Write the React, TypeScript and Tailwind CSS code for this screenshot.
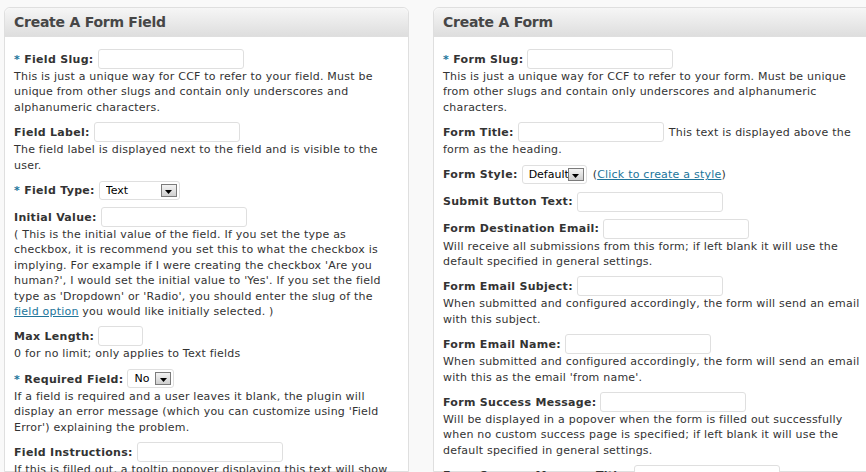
import React from "react";

const Input = ({ narrow }: { narrow?: boolean }) => (
  <span
    className={
      narrow
        ? "inline-block h-[20px] w-[45px] shrink-0 rounded-[3px] border border-[#dfdfdf] bg-white"
        : "inline-block h-[20px] w-[146px] shrink-0 rounded-[3px] border border-[#dfdfdf] bg-white"
    }
  />
);

const Select = ({ text, wide }: { text: string; wide: "text" | "no" | "default" }) => (
  <span
    className={
      "flex h-[19px] shrink-0 items-center rounded-[3px] border border-[#dfdfdf] bg-white pl-[6px] pr-[2px] text-[11px] font-normal tracking-normal text-black " +
      (wide === "text" ? "w-[81px]" : wide === "no" ? "w-[47px]" : "w-[65px]")
    }
  >
    <span className="min-w-0 flex-1 overflow-hidden leading-[17px]">{text}</span>
    <span className="flex h-[13px] w-[16px] shrink-0 items-end justify-center border border-[#7b7b7b] bg-linear-to-b from-[#f4f4f4] to-[#cfcfcf] pb-[2px]">
      <svg width="7" height="4" viewBox="0 0 7 4">
        <path d="M0 0H7L3.5 4Z" fill="#000" />
      </svg>
    </span>
  </span>
);

const Field = ({
  label,
  req,
  control,
  after,
  lines,
}: {
  label: string;
  req?: boolean;
  control: React.ReactNode;
  after?: React.ReactNode;
  lines?: React.ReactNode[];
}) => (
  <div className="flex flex-col">
    <div className="flex h-[20px] items-center gap-[4px] whitespace-nowrap">
      <span className="pt-[2px] font-bold tracking-[0.3px] text-[#333]">
        {req && <span className="text-[#21759b]">* </span>}
        {label}
      </span>
      {control}
      {after}
    </div>
    {lines && (
      <div className="whitespace-nowrap leading-[15.4px] text-[#333]">
        {lines.map((l, i) => (
          <div key={i}>{l}</div>
        ))}
      </div>
    )}
  </div>
);

const Panel = ({
  title,
  wide,
  children,
}: {
  title: string;
  wide?: boolean;
  children: React.ReactNode;
}) => (
  <div
    className={
      "shrink-0 rounded-t-[6px] border border-[#dfdfdf] bg-white " +
      (wide ? "w-[470px]" : "w-[405px]")
    }
  >
    <div className="h-[29px] rounded-t-[6px] border-b border-[#dfdfdf] bg-linear-to-b from-[#f6f6f6] to-[#dedede] px-[9px] text-[14px] font-bold leading-[29px] tracking-[-0.25px] text-[#464646]">
      {title}
    </div>
    <div className="flex flex-col gap-[7px] px-[9px] pt-[12px] text-[11px] tracking-[0.22px]">
      {children}
    </div>
  </div>
);

const Link = ({ children }: { children: React.ReactNode }) => (
  <span className="text-[#21759b] underline">{children}</span>
);

export default function App() {
  return (
    <div className="flex h-[472px] w-[866px] gap-[24px] overflow-hidden bg-[#f9f9f9] pl-[4px] pt-[7px] font-['DejaVu_Sans','Verdana',sans-serif]">
      <Panel title="Create A Form Field">
        <Field
          label="Field Slug:"
          req
          control={<Input />}
          lines={[
            "This is just a unique way for CCF to refer to your field. Must be",
            "unique from other slugs and contain only underscores and",
            "alphanumeric characters.",
          ]}
        />
        <Field
          label="Field Label:"
          control={<Input />}
          lines={[
            "The field label is displayed next to the field and is visible to the",
            "user.",
          ]}
        />
        <Field label="Field Type:" req control={<Select text="Text" wide="text" />} />
        <Field
          label="Initial Value:"
          control={<Input />}
          lines={[
            "( This is the initial value of the field. If you set the type as",
            "checkbox, it is recommend you set this to what the checkbox is",
            "implying. For example if I were creating the checkbox 'Are you",
            "human?', I would set the initial value to 'Yes'. If you set the field",
            "type as 'Dropdown' or 'Radio', you should enter the slug of the",
            <>
              <Link>field option</Link> you would like initially selected. )
            </>,
          ]}
        />
        <Field
          label="Max Length:"
          control={<Input narrow />}
          lines={["0 for no limit; only applies to Text fields"]}
        />
        <Field
          label="Required Field:"
          req
          control={<Select text="No" wide="no" />}
          lines={[
            "If a field is required and a user leaves it blank, the plugin will",
            "display an error message (which you can customize using 'Field",
            "Error') explaining the problem.",
          ]}
        />
        <Field
          label="Field Instructions:"
          control={<Input />}
          lines={[
            "If this is filled out, a tooltip popover displaying this text will show",
          ]}
        />
      </Panel>

      <Panel title="Create A Form" wide>
        <Field
          label="Form Slug:"
          req
          control={<Input />}
          lines={[
            "This is just a unique way for CCF to refer to your form. Must be unique",
            "from other slugs and contain only underscores and alphanumeric",
            "characters.",
          ]}
        />
        <Field
          label="Form Title:"
          control={<Input />}
          after={
            <span className="pl-[1px] pt-[2px] text-[#333]">This text is displayed above the</span>
          }
          lines={["form as the heading."]}
        />
        <Field
          label="Form Style:"
          control={<Select text="Default" wide="default" />}
          after={
            <span className="pl-[2px] pt-[2px] text-[#333]">
              (<Link>Click to create a style</Link>)
            </span>
          }
        />
        <Field label="Submit Button Text:" control={<Input />} />
        <Field
          label="Form Destination Email:"
          control={<Input />}
          lines={[
            "Will receive all submissions from this form; if left blank it will use the",
            "default specified in general settings.",
          ]}
        />
        <Field
          label="Form Email Subject:"
          control={<Input />}
          lines={[
            "When submitted and configured accordingly, the form will send an email",
            "with this subject.",
          ]}
        />
        <Field
          label="Form Email Name:"
          control={<Input />}
          lines={[
            "When submitted and configured accordingly, the form will send an email",
            "with this as the email 'from name'.",
          ]}
        />
        <Field
          label="Form Success Message:"
          control={<Input />}
          lines={[
            "Will be displayed in a popover when the form is filled out successfully",
            "when no custom success page is specified; if left blank it will use the",
            "default specified in general settings.",
          ]}
        />
        <Field label="Form Success Message Title:" control={<Input />} />
      </Panel>
    </div>
  );
}
